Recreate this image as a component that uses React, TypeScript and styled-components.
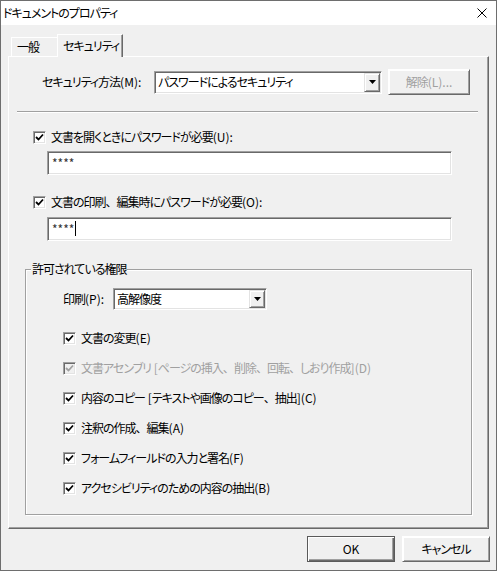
import React from "react";
import styled, { createGlobalStyle, css } from "styled-components";

const GlobalStyle = createGlobalStyle`
  html, body { margin: 0; padding: 0; background: #f0f0f0; }
  body {
    font-family: "Noto Sans CJK JP", "Noto Sans", sans-serif;
    font-size: 12px;
    line-height: 16px;
    color: #000;
  }
  * { box-sizing: border-box; }
`;

const Window = styled.div`
  width: 497px;
  height: 571px;
  border: 1px solid #6e6e6e;
  display: flex;
  flex-direction: column;
  background: #f0f0f0;
  font-feature-settings: "palt";
  letter-spacing: -1px;
`;

const TitleBar = styled.div`
  height: 24px;
  background: #fff;
  display: flex;
  align-items: center;
  justify-content: space-between;
  padding: 0 9px 0 2px;
`;

const Title = styled.span`
  font-size: 12px;
`;

const Body = styled.div`
  flex: 1;
  display: flex;
  flex-direction: column;
`;

const TabStrip = styled.div`
  display: flex;
  align-items: flex-end;
  height: 22px;
  margin: 9px 0 0 10px;
`;

const Tab = styled.div<{ $active?: boolean }>`
  display: flex;
  align-items: center;
  padding-left: 5px;
  white-space: nowrap;
  background: #f0f0f0;
  border-top: 1px solid #fff;
  border-left: 1px solid #fff;
  border-right: 1px solid #696969;
  box-shadow: inset -1px 0 0 #a0a0a0;
  ${(p) =>
    p.$active
      ? css`
          height: 23px;
          width: 66px;
          margin-left: -2px;
          margin-bottom: -1px;
          position: relative;
          z-index: 1;
        `
      : css`
          height: 19px;
          width: 48px;
        `}
`;

const Panel = styled.div`
  margin-left: 7px;
  width: 481px;
  height: 473px;
  border-top: 1px solid #fff;
  border-left: 1px solid #fff;
  border-right: 1px solid #696969;
  border-bottom: 1px solid #696969;
  box-shadow: inset -1px -1px 0 #a0a0a0;
  display: flex;
  flex-direction: column;
`;

const MethodRow = styled.div`
  display: flex;
  align-items: center;
  height: 26px;
  margin-top: 12px;
  padding-left: 33px;
`;

const FieldLabel = styled.span<{ $width: number }>`
  width: ${(p) => p.$width}px;
  flex: none;
  white-space: nowrap;
`;

const sunken = css`
  background: #fff;
  border-top: 1px solid #a0a0a0;
  border-left: 1px solid #a0a0a0;
  border-right: 1px solid #fff;
  border-bottom: 1px solid #fff;
  box-shadow: inset 1px 1px 0 #696969, inset -1px -1px 0 #e3e3e3;
`;

const raised = css`
  background: #f0f0f0;
  border-top: 1px solid #e3e3e3;
  border-left: 1px solid #e3e3e3;
  border-right: 1px solid #696969;
  border-bottom: 1px solid #696969;
  box-shadow: inset 1px 1px 0 #fff, inset -1px -1px 0 #a0a0a0;
`;

const Combo = styled.div<{ $width: number; $height: number }>`
  ${sunken};
  width: ${(p) => p.$width}px;
  height: ${(p) => p.$height}px;
  flex: none;
  display: flex;
  padding: 1px;
`;

const ComboText = styled.div`
  flex: 1;
  display: flex;
  align-items: center;
  padding-left: 2px;
  white-space: nowrap;
`;

const ComboButton = styled.div`
  ${raised};
  width: 16px;
  flex: none;
  display: flex;
  align-items: center;
  justify-content: center;
`;

const PushButton = styled.button<{ $default?: boolean; $width: number; $height: number; $gapLeft?: number }>`
  font: inherit;
  font-feature-settings: "palt";
  letter-spacing: inherit;
  width: ${(p) => p.$width}px;
  height: ${(p) => p.$height}px;
  margin-left: ${(p) => p.$gapLeft ?? 0}px;
  padding: 0;
  flex: none;
  color: #000;
  ${raised};
  border-top-color: #fff;
  border-left-color: #fff;
  &:disabled {
    color: #a0a0a0;
  }
  ${(p) =>
    p.$default &&
    css`
      border: 1px solid #5a5a5a;
      box-shadow: inset 1px 1px 0 #fff, inset -1px -1px 0 #696969, inset -2px -2px 0 #a0a0a0;
    `}
`;

const Separator = styled.div`
  margin: 16px 0 0 8px;
  width: 461px;
  height: 2px;
  border-top: 1px solid #a0a0a0;
  border-bottom: 1px solid #fff;
`;

const CheckRow = styled.div<{ $indent: number; $gap: number; $disabled?: boolean }>`
  display: flex;
  align-items: center;
  height: 16px;
  gap: 5px;
  padding-left: ${(p) => p.$indent}px;
  margin-top: ${(p) => p.$gap}px;
  color: ${(p) => (p.$disabled ? "#a0a0a0" : "#000")};
  white-space: nowrap;
`;

const Box = styled.span<{ $disabled?: boolean }>`
  ${sunken};
  width: 13px;
  height: 13px;
  flex: none;
  display: flex;
  align-items: center;
  justify-content: center;
  background: ${(p) => (p.$disabled ? "#f0f0f0" : "#fff")};
`;

const PasswordField = styled.div<{ $gap: number }>`
  ${sunken};
  margin: ${(p) => p.$gap}px 0 0 38px;
  width: 405px;
  height: 24px;
  padding: 3px 3px 0 4px;
  display: flex;
  align-items: flex-start;
  color: #333;
  font-size: 12px;
  line-height: 15px;
  letter-spacing: 0;
`;

const Caret = styled.span`
  display: inline-block;
  width: 1px;
  height: 15px;
  background: #000;
  margin-left: 1px;
`;

const Group = styled.div`
  position: relative;
  margin: 28px 0 0 16px;
  width: 447px;
  height: 246px;
  border: 1px solid #a0a0a0;
  box-shadow: inset 1px 1px 0 #fff, 1px 1px 0 #fff;
  display: flex;
  flex-direction: column;
`;

const Legend = styled.span`
  position: absolute;
  top: -9px;
  left: 5px;
  padding: 0 1px;
  background: #f0f0f0;
  line-height: 16px;
  white-space: nowrap;
`;

const PrintRow = styled.div`
  display: flex;
  align-items: center;
  height: 22px;
  margin-top: 18px;
  padding-left: 37px;
`;

const PermList = styled.div`
  display: flex;
  flex-direction: column;
  gap: 14px;
  margin-top: 20px;
`;

const ButtonBar = styled.div`
  display: flex;
  justify-content: flex-end;
  gap: 7px;
  margin-top: 7px;
  padding-right: 6px;
`;

/* full-width punctuation keeps its full em, as in the reference UI font */
const Punct = styled.span`
  font-feature-settings: normal;
`;

/* latin runs keep natural spacing */
const Latin = styled.span`
  letter-spacing: 0;
`;

const Label = ({ text }: { text: string }) => {
  const parts = text.split(/(、|[\x20-\x7e]+)/).filter((s) => s !== "");
  return (
    <span>
      {parts.map((part, i) =>
        part === "、" ? (
          <Punct key={i}>、</Punct>
        ) : /^[\x20-\x7e]+$/.test(part) ? (
          <Latin key={i}>{part}</Latin>
        ) : (
          <React.Fragment key={i}>{part}</React.Fragment>
        )
      )}
    </span>
  );
};

const CloseIcon = () => (
  <svg width="10" height="10" viewBox="0 0 10 10">
    <path d="M0.5 0.5 L9.5 9.5 M9.5 0.5 L0.5 9.5" stroke="#000" strokeWidth="1" fill="none" />
  </svg>
);

const Arrow = () => (
  <svg width="7" height="4" viewBox="0 0 7 4">
    <polygon points="0,0 7,0 3.5,4" fill="#000" />
  </svg>
);

const Check = ({ color }: { color: string }) => (
  <svg width="9" height="9" viewBox="0 0 9 9">
    <polyline points="1,4 3.5,6.5 8,1.5" stroke={color} strokeWidth="1.8" fill="none" />
  </svg>
);

const CheckBox = ({ disabled }: { disabled?: boolean }) => (
  <Box $disabled={disabled}>
    <Check color={disabled ? "#a0a0a0" : "#000"} />
  </Box>
);

const permissions: { label: string; disabled?: boolean }[] = [
  { label: "文書の変更(E)" },
  { label: "文書アセンブリ [ページの挿入、削除、回転、しおり作成](D)", disabled: true },
  { label: "内容のコピー [テキストや画像のコピー、抽出](C)" },
  { label: "注釈の作成、編集(A)" },
  { label: "フォームフィールドの入力と署名(F)" },
  { label: "アクセシビリティのための内容の抽出(B)" },
];

export default function App() {
  return (
    <>
      <GlobalStyle />
      <Window>
        <TitleBar>
          <Title>ドキュメントのプロパティ</Title>
          <CloseIcon />
        </TitleBar>
        <Body>
          <TabStrip>
            <Tab>一般</Tab>
            <Tab $active>セキュリティ</Tab>
          </TabStrip>
          <Panel>
            <MethodRow>
              <FieldLabel $width={112}>
                <Label text="セキュリティ方法(M):" />
              </FieldLabel>
              <Combo $width={228} $height={23}>
                <ComboText>パスワードによるセキュリティ</ComboText>
                <ComboButton>
                  <Arrow />
                </ComboButton>
              </Combo>
              <PushButton $width={82} $height={26} $gapLeft={6} disabled>
                <Label text="解除(L)..." />
              </PushButton>
            </MethodRow>
            <Separator />
            <CheckRow $indent={24} $gap={16}>
              <CheckBox />
              <Label text="文書を開くときにパスワードが必要(U):" />
            </CheckRow>
            <PasswordField $gap={6}>****</PasswordField>
            <CheckRow $indent={24} $gap={19}>
              <CheckBox />
              <Label text="文書の印刷、編集時にパスワードが必要(O):" />
            </CheckRow>
            <PasswordField $gap={7}>
              ****
              <Caret />
            </PasswordField>
            <Group>
              <Legend>許可されている権限</Legend>
              <PrintRow>
                <FieldLabel $width={50}>
                  <Label text="印刷(P):" />
                </FieldLabel>
                <Combo $width={154} $height={22}>
                  <ComboText>高解像度</ComboText>
                  <ComboButton>
                    <Arrow />
                  </ComboButton>
                </Combo>
              </PrintRow>
              <PermList>
                {permissions.map((p) => (
                  <CheckRow key={p.label} $indent={37} $gap={0} $disabled={p.disabled}>
                    <CheckBox disabled={p.disabled} />
                    <Label text={p.label} />
                  </CheckRow>
                ))}
              </PermList>
            </Group>
          </Panel>
          <ButtonBar>
            <PushButton $default $width={88} $height={26}>
              <Label text="OK" />
            </PushButton>
            <PushButton $width={88} $height={26}>
              キャンセル
            </PushButton>
          </ButtonBar>
        </Body>
      </Window>
    </>
  );
}
